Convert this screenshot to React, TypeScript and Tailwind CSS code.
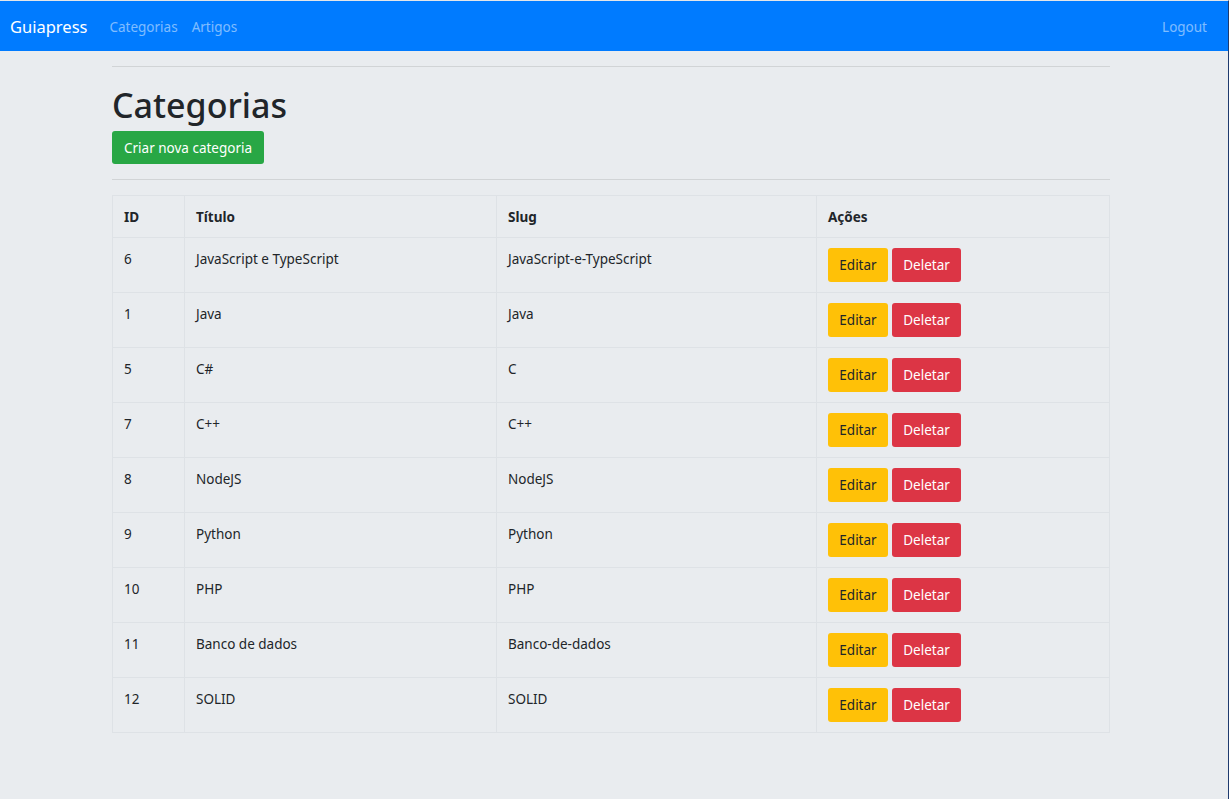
import React from "react";

type Categoria = {
  id: number;
  title: string;
  slug: string;
};

const categorias: Categoria[] = [
  { id: 6, title: "JavaScript e TypeScript", slug: "JavaScript-e-TypeScript" },
  { id: 1, title: "Java", slug: "Java" },
  { id: 5, title: "C#", slug: "C" },
  { id: 7, title: "C++", slug: "C++" },
  { id: 8, title: "NodeJS", slug: "NodeJS" },
  { id: 9, title: "Python", slug: "Python" },
  { id: 10, title: "PHP", slug: "PHP" },
  { id: 11, title: "Banco de dados", slug: "Banco-de-dados" },
  { id: 12, title: "SOLID", slug: "SOLID" },
];

const Navbar = () => (
  <nav className="flex h-[50px] items-center bg-[#007bff] pl-[10px] pr-[21px]">
    <a className="mr-[22px] pt-[2px] text-[16.5px] leading-none text-white">Guiapress</a>
    <div className="flex flex-1 items-center gap-[14px] pt-[2px] text-[13.5px] text-white/50">
      <a>Categorias</a>
      <a>Artigos</a>
    </div>
    <a className="pt-[2px] text-[13.5px] text-white/50">Logout</a>
  </nav>
);

const Row = ({ cat }: { cat: Categoria }) => (
  <tr className="border-t border-[#dee2e6]">
    <td className="h-[55px] border-r border-[#dee2e6] px-[11px] pt-[11px] align-top">{cat.id}</td>
    <td className="border-r border-[#dee2e6] px-[11px] pt-[11px] align-top">{cat.title}</td>
    <td className="border-r border-[#dee2e6] px-[11px] pt-[11px] align-top">{cat.slug}</td>
    <td className="px-[11px] align-middle">
      <div className="flex gap-[4px]">
        <button className="h-[34px] w-[60px] rounded-[3px] bg-[#ffc107] text-[#212529]">Editar</button>
        <button className="h-[34px] w-[69px] rounded-[3px] bg-[#dc3545] text-white">Deletar</button>
      </div>
    </td>
  </tr>
);

export default function App() {
  return (
    <div
      className="min-h-[799px] border-r border-[#1e3a6e] border-t border-t-[#e4e6e9] bg-[#e9ecef] text-[13.5px] text-[#212529]"
      style={{ fontFamily: '"Noto Sans", "Open Sans", sans-serif' }}
    >
      <Navbar />
      <main className="ml-[112px] w-[998px] pt-[15px]">
        <hr className="border-t border-black/10" />
        <h1 className="mt-[17px] text-[34px] font-medium leading-[43px]">Categorias</h1>
        <button className="mt-[4px] h-[33px] rounded-[3px] bg-[#28a745] px-[12px] pt-[1px] text-white">
          Criar nova categoria
        </button>
        <hr className="mt-[15px] border-t border-black/10" />
        <table className="mt-[15px] w-full border border-[#dee2e6] text-left">
          <thead>
            <tr>
              <th className="h-[42px] w-[72px] border-r border-[#dee2e6] px-[11px] pt-[2px] font-bold">ID</th>
              <th className="w-[312px] border-r border-[#dee2e6] px-[11px] pt-[2px] font-bold">Título</th>
              <th className="w-[320px] border-r border-[#dee2e6] px-[11px] pt-[2px] font-bold">Slug</th>
              <th className="px-[11px] pt-[2px] font-bold">Ações</th>
            </tr>
          </thead>
          <tbody>
            {categorias.map((cat) => (
              <Row key={cat.id} cat={cat} />
            ))}
          </tbody>
        </table>
      </main>
    </div>
  );
}
